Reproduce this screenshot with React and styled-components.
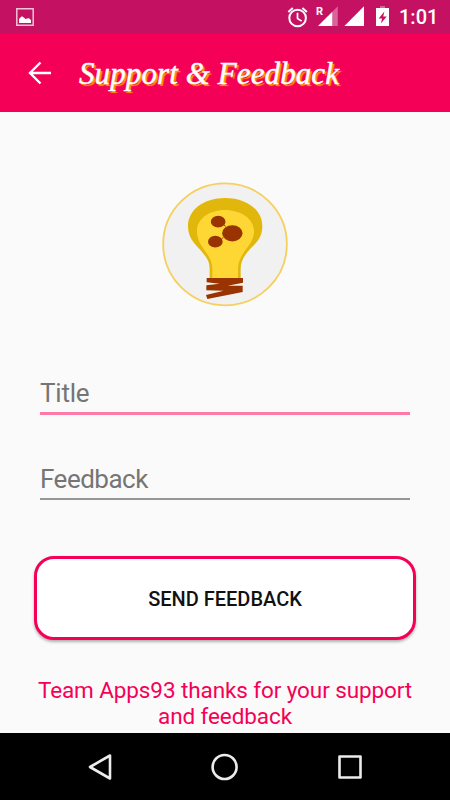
import React from 'react';
import styled, { createGlobalStyle } from 'styled-components';

const GlobalStyle = createGlobalStyle`
  *{
    box-sizing:border-box;
  }
  body{
    margin:0;
    background-color:#fafafa;
    font-family:Roboto, "Liberation Sans", sans-serif;
  }
`;

const StatusIcons = () => (
  <svg width="106" height="33" viewBox="285 0 106 33">
    <g fill="none" stroke="#fff" strokeWidth="2">
      <circle cx="297.6" cy="18" r="8.3" />
      <path d="M297.5 12.8v5.7l4.2 2.6" strokeWidth="1.7" />
      <path d="M288.3 11.9l4.5-3.8M306.9 11.9l-4.5-3.8" />
    </g>
    <path d="M332.3 11.8V26H318z" fill="#fff" />
    <path d="M332.3 11.8L337.8 6.3V26h-5.5z" fill="#fff" opacity=".35" />
    <path d="M364 6.3V26h-19.6z" fill="#fff" />
    <path d="M380 6h5v2h-5z" fill="#fff" opacity=".35" />
    <path
      d="M376 8h13v18h-13zM384.4 11.4l-5.7 7h3.4l-1.2 5.2 5.8-7h-3.5z"
      fill="#fff"
      fillRule="evenodd"
    />
  </svg>
);

const Bulb = () => (
  <svg width="150" height="150" viewBox="0 0 450 450">
    <ellipse cx="225" cy="223" rx="185.5" ry="183" fill="#f1f1f1" stroke="#f5d060" strokeWidth="5.5" />
    <path
      d="M225 84C160 84 114 120 114 168C114 200 130 218 149 238C167 258 179 272 179 296V326H272V296C272 272 284 254 303 234C322 216 337 200 337 168C337 120 290 84 225 84Z"
      fill="#e2b70c"
    />
    <path
      d="M225 120C176 120 141 148 141 182C141 206 151 222 163 240C178 262 187 274 187 300V325H264V300C264 274 273 260 288 238C301 220 312 206 312 182C312 148 274 120 225 120Z"
      fill="#ffd735"
    />
    <g fill="#993300">
      <ellipse cx="204.5" cy="155" rx="22" ry="17.5" />
      <ellipse cx="247" cy="190" rx="30.5" ry="24.5" />
      <ellipse cx="196" cy="215" rx="22" ry="17.5" />
      <path d="M170 324H279V338L233 347L278 347V366L172 387L168 375L221 362L169 361V346L209 341L170 337z" />
    </g>
    <path d="M221 164l6 5M215 206l5-3" stroke="#993300" strokeWidth="3" />
  </svg>
);

const App = () => {
  return (
    <Screen>
      <GlobalStyle />
      <StatusBar>
        <svg width="18" height="18" viewBox="0 0 18 18">
          <path d="M.8.8h16.4v16.4H.8z" fill="none" stroke="#fff" strokeWidth="1.5" opacity=".75" />
          <path d="M3 15v-4l2.5-2.5h1l3 2.5 2.5-.8h1L15 12v3z" fill="#fff" />
        </svg>
        <StatusRight>
          <StatusIcons />
          <Roaming>R</Roaming>
          <Clock>1:01</Clock>
        </StatusRight>
      </StatusBar>
      <AppBar>
        <svg width="24" height="24" viewBox="0 0 24 24" fill="none" stroke="#fff" strokeWidth="2.4">
          <path d="M23 12H2.5M12.5 1.500L2 12l10.5 10.5" />
        </svg>
        <Heading>Support &amp; Feedback</Heading>
      </AppBar>
      <Content>
        <Logo>
          <Bulb />
        </Logo>
        <Field $focused>Title</Field>
        <Field>Feedback</Field>
        <SendButton>SEND FEEDBACK</SendButton>
        <Thanks>
          Team Apps93 thanks for your support
          <br />
          and feedback
        </Thanks>
      </Content>
      <NavBar>
        <svg width="28" height="28" viewBox="0 0 28 28">
          <path d="M24 2.5v23L4 14z" />
        </svg>
        <svg width="28" height="28" viewBox="0 0 28 28">
          <circle cx="13.6" cy="14" r="12" />
        </svg>
        <svg width="28" height="28" viewBox="0 0 28 28">
          <path d="M3.500 3.500h21v21h-21z" />
        </svg>
      </NavBar>
    </Screen>
  );
};

export default App;

const Screen = styled.div`
  width:450px;
  height:800px;
  display:flex;
  flex-direction:column;
  overflow:hidden;
  background-color:#fafafa;
`;

const StatusBar = styled.header`
  height:33.5px;
  flex:none;
  display:flex;
  justify-content:space-between;
  padding:0 12px 0 16px;
  background-color:#c51162;

  > svg{
    margin-top:8px;
  }
`;

const StatusRight = styled.div`
  position:relative;
  display:flex;
`;

const Roaming = styled.span`
  position:absolute;
  left:31px;
  top:6px;
  font-size:11px;
  line-height:12px;
  font-weight:700;
  color:#fff;
`;

const Clock = styled.span`
  width:47px;
  padding-left:8px;
  font-size:20px;
  line-height:35px;
  font-weight:500;
  color:#fff;
  white-space:nowrap;
`;

const AppBar = styled.div`
  height:78.5px;
  flex:none;
  display:flex;
  align-items:center;
  padding-left:28px;
  background-color:#f50057;

  svg{
    margin-top:1px;
  }
`;

const Heading = styled.h1`
  margin:3px 0 0 27px;
  font-family:"Liberation Serif", serif;
  font-size:31px;
  line-height:40px;
  font-style:italic;
  font-weight:400;
  letter-spacing:0.1px;
  color:#fff;
  -webkit-text-stroke:0.5px #fff;
  text-shadow:2px 2px 1px #ff9800;
  white-space:nowrap;
`;

const Content = styled.main`
  flex:1;
  min-height:0;
  display:flex;
  flex-direction:column;
`;

const Logo = styled.div`
  height:208px;
  margin-top:58px;
  flex:none;
  display:flex;
  justify-content:center;
`;

const Field = styled.div`
  flex:none;
  height:${({ $focused }) => ($focused ? '37px' : '36px')};
  margin:${({ $focused }) => ($focused ? '0 40px 49px' : '0 40px 56px')};
  font-size:26px;
  line-height:31px;
  letter-spacing:${({ $focused }) => ($focused ? '-0.2px' : '-0.5px')};
  color:#757575;
  border-bottom:${({ $focused }) => ($focused ? '3px solid #ff7ba7' : '2px solid #969696')};
`;

const SendButton = styled.button`
  flex:none;
  height:84px;
  margin:0 34px;
  padding:1px 0 0;
  border:3px solid #f50057;
  border-radius:20px;
  background-color:#fff;
  font-family:Roboto, "Liberation Sans", sans-serif;
  font-size:20px;
  font-weight:500;
  color:#111;
  box-shadow:0 2px 3px rgba(0,0,0,0.3);
`;

const Thanks = styled.p`
  margin:37px 0 0;
  text-align:center;
  font-size:22.5px;
  line-height:26px;
  letter-spacing:-0.1px;
  color:#f50057;
  white-space:nowrap;
`;

const NavBar = styled.nav`
  height:67.5px;
  flex:none;
  display:flex;
  justify-content:space-between;
  align-items:center;
  padding:1px 86px 0 86px;
  background-color:#000;

  svg{
    fill:none;
    stroke:#ececec;
    stroke-width:2.6;
    stroke-linejoin:round;
  }
`;
